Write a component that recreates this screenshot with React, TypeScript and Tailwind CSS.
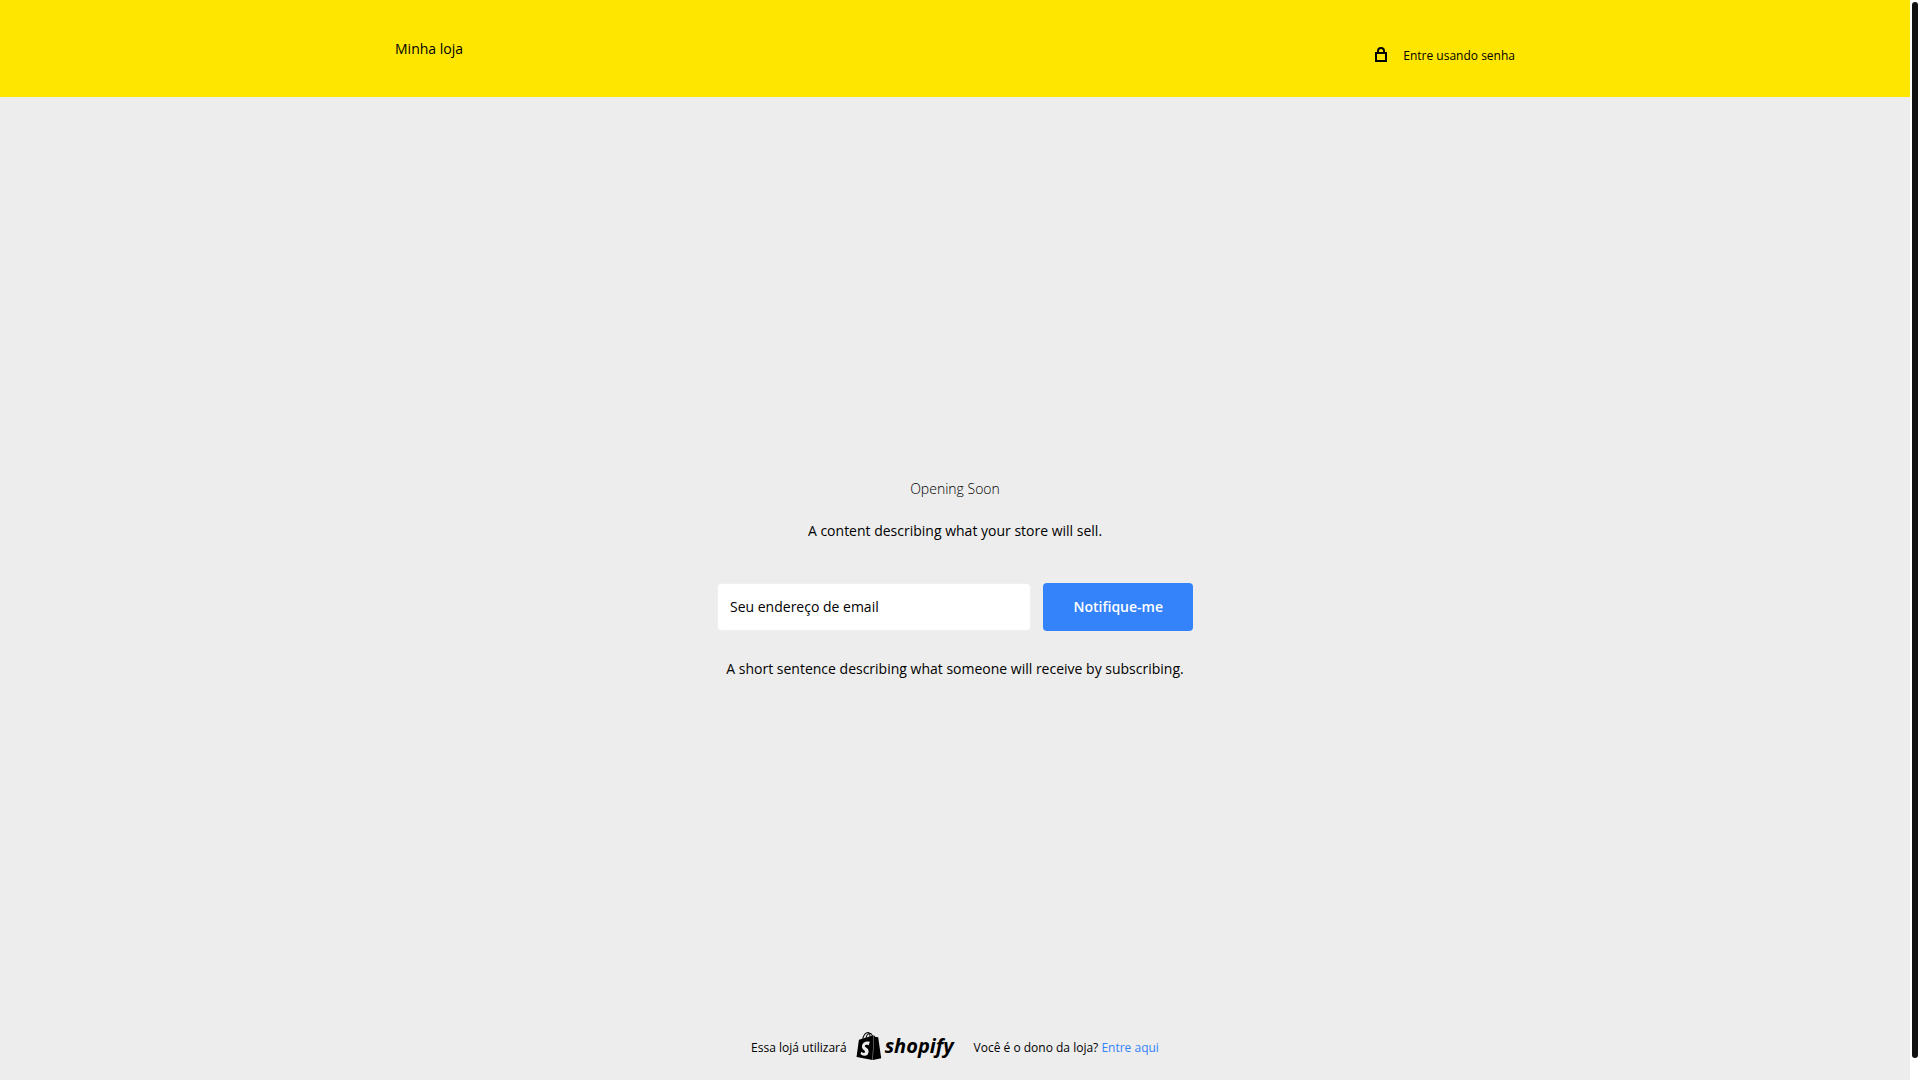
import { SiShopify } from "react-icons/si";

function LockIcon() {
  return (
    <svg className="h-4 w-3" viewBox="0 0 12 16" fill="none" stroke="currentColor" strokeWidth="2" aria-hidden="true">
      <path d="M1 6h10v8H1z" />
      <path d="M3 6V4a3 3 0 0 1 6 0v2" />
    </svg>
  );
}

function Header() {
  return (
    <header className="bg-[#ffe600]">
      <div className="mx-auto flex h-[97px] max-w-[1120px] items-center justify-between">
        <a href="#" className="text-sm">Minha loja</a>
        <button type="button" className="mt-[13px] flex items-center gap-4 text-xs">
          <LockIcon />
          <span className="pt-0.5">Entre usando senha</span>
        </button>
      </div>
    </header>
  );
}

function Signup() {
  return (
    <main className="flex flex-1 flex-col items-center justify-center pt-7 text-center text-sm">
      <h1 className="font-light">Opening Soon</h1>
      <p className="mt-[22px]">A content describing what your store will sell.</p>
      <div className="mt-[42px] w-full max-w-[476px]">
        <form className="flex h-12 gap-3" onSubmit={(e) => e.preventDefault()}>
          <input
            type="email"
            aria-label="Seu endereço de email"
            placeholder="Seu endereço de email"
            className="w-0 flex-1 rounded border border-[#f0f0f0] bg-white px-3 placeholder:text-black"
          />
          <button type="submit" className="rounded bg-[#3483fa] px-[30px] font-semibold text-white">
            Notifique-me
          </button>
        </form>
        <p className="mt-7">A short sentence describing what someone will receive by subscribing.</p>
      </div>
    </main>
  );
}

function Footer() {
  return (
    <footer className="flex items-center justify-center pb-5 text-xs">
      <span className="pt-1">Essa lojá utilizará</span>
      <a href="#" aria-label="shopify" className="ml-2 flex items-center gap-0.5">
        <SiShopify className="size-7" />
        <span className="text-xl leading-7 font-bold italic">shopify</span>
      </a>
      <p className="ml-5 pt-1">
        Você é o dono da loja?{" "}
        <a href="#" className="text-[#3483fa]">Entre aqui</a>
      </p>
    </footer>
  );
}

export default function App() {
  return (
    <div className="flex min-h-screen bg-white font-['Open_Sans',sans-serif] text-black">
      <div className="flex flex-1 flex-col bg-[#ededed]">
        <Header />
        <Signup />
        <Footer />
      </div>
      <div className="flex w-[10px] p-0.5 pb-[22px]" aria-hidden="true">
        <div className="flex-1 rounded-full bg-[#111111]" />
      </div>
    </div>
  );
}
